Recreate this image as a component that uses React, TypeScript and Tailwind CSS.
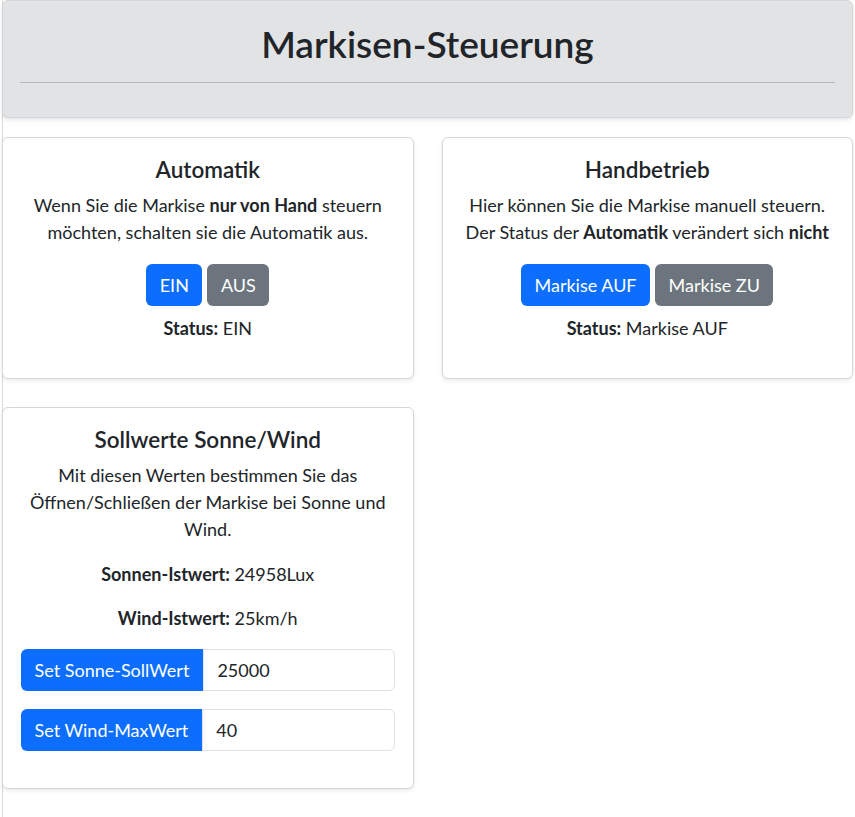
import React, { useState } from 'react';

const font = { fontFamily: '"Segoe UI", Lato, "Liberation Sans", sans-serif' };

const Card: React.FC<{ title: string; children: React.ReactNode }> = ({ title, children }) => (
  <div className="bg-white border border-[#d6d6d6] rounded-[6px] shadow-[0_2px_4px_rgba(0,0,0,0.08)]">
    <div className="p-[18px] text-center">
      <h5 className="text-[22.5px] leading-[27px] font-semibold mb-[9px]">{title}</h5>
      {children}
    </div>
  </div>
);

const btnBase = 'h-[42px] px-[13.5px] leading-[27px] text-white';

export default function App() {
  const [auto, setAuto] = useState(true);
  const [open, setOpen] = useState(true);
  const [sonne, setSonne] = useState('25000');
  const [wind, setWind] = useState('40');

  return (
    <div style={font} className="min-h-screen bg-white text-[#212529] text-[18px] leading-[27px]">
      <div className="mx-[2px] min-h-screen border-l border-[#d9d9d9]">
        <div className="-ml-px">
          {/* Header */}
          <div className="bg-[#e2e3e5] rounded-[6px] border border-[#d4d5d7] shadow-[0_2px_4px_rgba(0,0,0,0.1)] px-[17px] pt-[21px] pb-[34px]">
            <h1 className="text-[37px] leading-[43px] font-semibold text-center">Markisen-Steuerung</h1>
            <hr className="mt-[17px] border-0 border-t border-[#b5b6b8]" />
          </div>

          <div className="grid grid-cols-2 gap-[28px] mt-[19px]">
            <Card title="Automatik">
              <p className="mb-[18px]">
                Wenn Sie die Markise <b className="font-bold">nur von Hand</b> steuern möchten, schalten sie die Automatik aus.
              </p>
              <div className="flex justify-center gap-[5px]">
                <button onClick={() => setAuto(true)} className={`${btnBase} bg-[#0d6efd] rounded-[6px]`}>
                  EIN
                </button>
                <button onClick={() => setAuto(false)} className={`${btnBase} bg-[#6c757d] rounded-[6px]`}>
                  AUS
                </button>
              </div>
              <p className="mt-[9px] mb-[18px]">
                <b className="font-bold">Status:</b> {auto ? 'EIN' : 'AUS'}
              </p>
            </Card>

            <Card title="Handbetrieb">
              <p className="mb-[18px] whitespace-nowrap">
                Hier können Sie die Markise manuell steuern.
                <br />
                Der Status der <b className="font-bold">Automatik</b> verändert sich <b className="font-bold">nicht</b>
              </p>
              <div className="flex justify-center gap-[5px]">
                <button onClick={() => setOpen(true)} className={`${btnBase} bg-[#0d6efd] rounded-[6px]`}>
                  Markise AUF
                </button>
                <button onClick={() => setOpen(false)} className={`${btnBase} bg-[#6c757d] rounded-[6px]`}>
                  Markise ZU
                </button>
              </div>
              <p className="mt-[9px] mb-[18px]">
                <b className="font-bold">Status:</b> {open ? 'Markise AUF' : 'Markise ZU'}
              </p>
            </Card>

            <Card title="Sollwerte Sonne/Wind">
              <p className="mb-[18px]">
                Mit diesen Werten bestimmen Sie das Öffnen/Schließen der Markise bei Sonne und Wind.
              </p>
              <p className="mb-[17px]">
                <b className="font-bold">Sonnen-Istwert:</b> 24958Lux
              </p>
              <p className="mb-[17px]">
                <b className="font-bold">Wind-Istwert:</b> 25km/h
              </p>
              <div className="flex mb-[18px]">
                <button className={`${btnBase} bg-[#0d6efd] rounded-l-[6px] whitespace-nowrap`}>
                  Set Sonne-SollWert
                </button>
                <input
                  value={sonne}
                  onChange={(e) => setSonne(e.target.value)}
                  className="h-[42px] flex-1 min-w-0 border border-[#dee2e6] rounded-r-[6px] px-[13.5px] leading-[27px] text-[#212529] outline-none"
                />
              </div>
              <div className="flex mb-[19px]">
                <button className={`${btnBase} bg-[#0d6efd] rounded-l-[6px] whitespace-nowrap`}>
                  Set Wind-MaxWert
                </button>
                <input
                  value={wind}
                  onChange={(e) => setWind(e.target.value)}
                  className="h-[42px] flex-1 min-w-0 border border-[#dee2e6] rounded-r-[6px] px-[13.5px] leading-[27px] text-[#212529] outline-none"
                />
              </div>
            </Card>
          </div>
        </div>
      </div>
    </div>
  );
}
